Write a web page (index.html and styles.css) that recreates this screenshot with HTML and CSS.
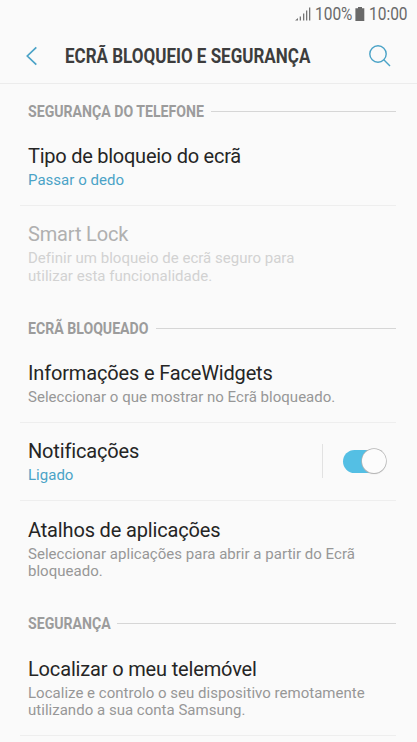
FILE: index.html
```
<!DOCTYPE html>
<html lang="pt">
<head>
<meta charset="utf-8">
<title>Ecrã bloqueio e segurança</title>
<link rel="stylesheet" href="styles.css">
</head>
<body>
<div class="status">
  <svg class="signal" width="16" height="14" viewBox="0 0 16 14"><path d="M0 13.5L3 11V13.5Z M4.7 9.5H6V13.5H4.7Z M8 6.5H9.3V13.5H8Z M11 3.5H12.3V13.5H11Z M14 .5H15.3V13.5H14Z" fill="#757575"/></svg>
  <span class="pct">100%</span>
  <svg class="battery" width="10" height="14" viewBox="0 0 10 14"><path d="M3 0H7V1.3H9.3V14H.4V1.3H3Z" fill="#696969"/></svg>
  <span class="clock">10:00</span>
</div>
<header class="bar">
  <svg class="back" width="12" height="20" viewBox="0 0 12 20"><path d="M10.3 1.3L1.3 10L10.3 18.7" fill="none" stroke="#4ba3c7" stroke-width="1.7"/></svg>
  <h1><span>ECRÃ BLOQUEIO E SEGURANÇA</span></h1>
  <svg class="search" width="22" height="22" viewBox="0 0 22 22"><g fill="none" stroke="#4ba3c7" stroke-width="1.4"><circle cx="9" cy="9" r="8.2"/><path d="M14.8 14.8L21 21"/></g></svg>
</header>
<main>
  <h2><span class="label phone"><span>SEGURANÇA DO TELEFONE</span></span></h2>
  <section class="row"><h3 class="t1">Tipo de bloqueio do ecrã</h3><p class="on">Passar o dedo</p></section>
  <section class="row tall off last"><h3>Smart Lock</h3><p>Definir um bloqueio de ecrã seguro para<br>utilizar esta funcionalidade.</p></section>
  <h2><span class="label locked"><span>ECRÃ BLOQUEADO</span></span></h2>
  <section class="row"><h3>Informações e FaceWidgets</h3><p>Seleccionar o que mostrar no Ecrã bloqueado.</p></section>
  <section class="row split"><div><h3>Notificações</h3><p class="on">Ligado</p></div><div class="toggle"><span class="switch"><span class="knob"></span></span></div></section>
  <section class="row tall last"><h3>Atalhos de aplicações</h3><p>Seleccionar aplicações para abrir a partir do Ecrã<br>bloqueado.</p></section>
  <h2><span class="label safe"><span>SEGURANÇA</span></span></h2>
  <section class="row tall"><h3>Localizar o meu telemóvel</h3><p>Localize e controlo o seu dispositivo remotamente<br>utilizando a sua conta Samsung.</p></section>
</main>
</body>
</html>
```
FILE: styles.css
```
* { box-sizing: border-box; }
html, body { height: 100%; overflow: hidden; }
body { margin: 0; background: #fafafa; color: #252525; font-family: Roboto, sans-serif; }
h1, h2, h3, p { margin: 0; }
svg { display: block; flex: none; }
.status { height: 28px; display: flex; align-items: center; padding-left: 295px; color: #696969; font-size: 18px; line-height: 28px; }
.status span { display: block; white-space: nowrap; transform-origin: left; transform: scaleX(.86); }
.pct { width: 37px; margin-left: 4px; }
.battery { margin-left: 3px; }
.clock { margin-left: 4px; }
.bar { height: 56px; display: flex; align-items: center; padding-left: 26px; border-bottom: 1px solid #ececec; }
h1 { width: 246px; margin-left: 27px; padding-top: 1px; font-size: 20px; line-height: 24px; font-weight: 700; color: #3d3d3d; white-space: nowrap; }
h1 span, .label span { display: block; transform-origin: left; transform: scaleX(.85); }
.search { margin-left: 58px; }
main { padding: .5px 21px 0 20px; }
h2 { height: 43.4px; padding: 11px 0 0 8px; display: flex; align-items: center; font-size: 16px; line-height: 20px; font-weight: 700; color: #9c9c9c; white-space: nowrap; }
h2::after { content: ""; flex: 1; height: 1px; margin-left: 7px; background: #d6d6d6; }
.label { padding-top: 1px; }
.label span { transform: scaleX(.882); }
.phone { width: 176px; }
.locked { width: 121px; }
.safe { width: 82px; }
.row { height: 78.1px; padding: 16.4px 0 0 8px; border-bottom: 1px solid #eeeeee; white-space: nowrap; }
.tall { height: 95.6px; }
.last { border-bottom: 0; }
h3 { font-size: 20px; line-height: 24px; font-weight: 400; letter-spacing: -.16px; }
.t1 { letter-spacing: -.25px; }
p { margin-top: 4px; font-size: 15px; line-height: 17.5px; letter-spacing: .02px; color: #979797; }
.on { color: #4ba3c7; }
.off h3 { color: #b0b0b0; }
.off p { color: #d2d2d2; }
.split { display: flex; justify-content: space-between; }
.toggle { width: 74px; height: 34px; margin-top: 5px; padding-left: 20px; border-left: 1px solid #e2e2e2; display: flex; align-items: center; }
.switch { width: 43px; height: 23px; border-radius: 12px; background: #54bfe4; display: flex; align-items: center; justify-content: flex-end; }
.knob { width: 24px; height: 24px; flex: none; border-radius: 50%; background: #fcfcfc; box-shadow: 0 0 0 .7px #b3b3b3, 0 1px 1px #bbb; }
```
